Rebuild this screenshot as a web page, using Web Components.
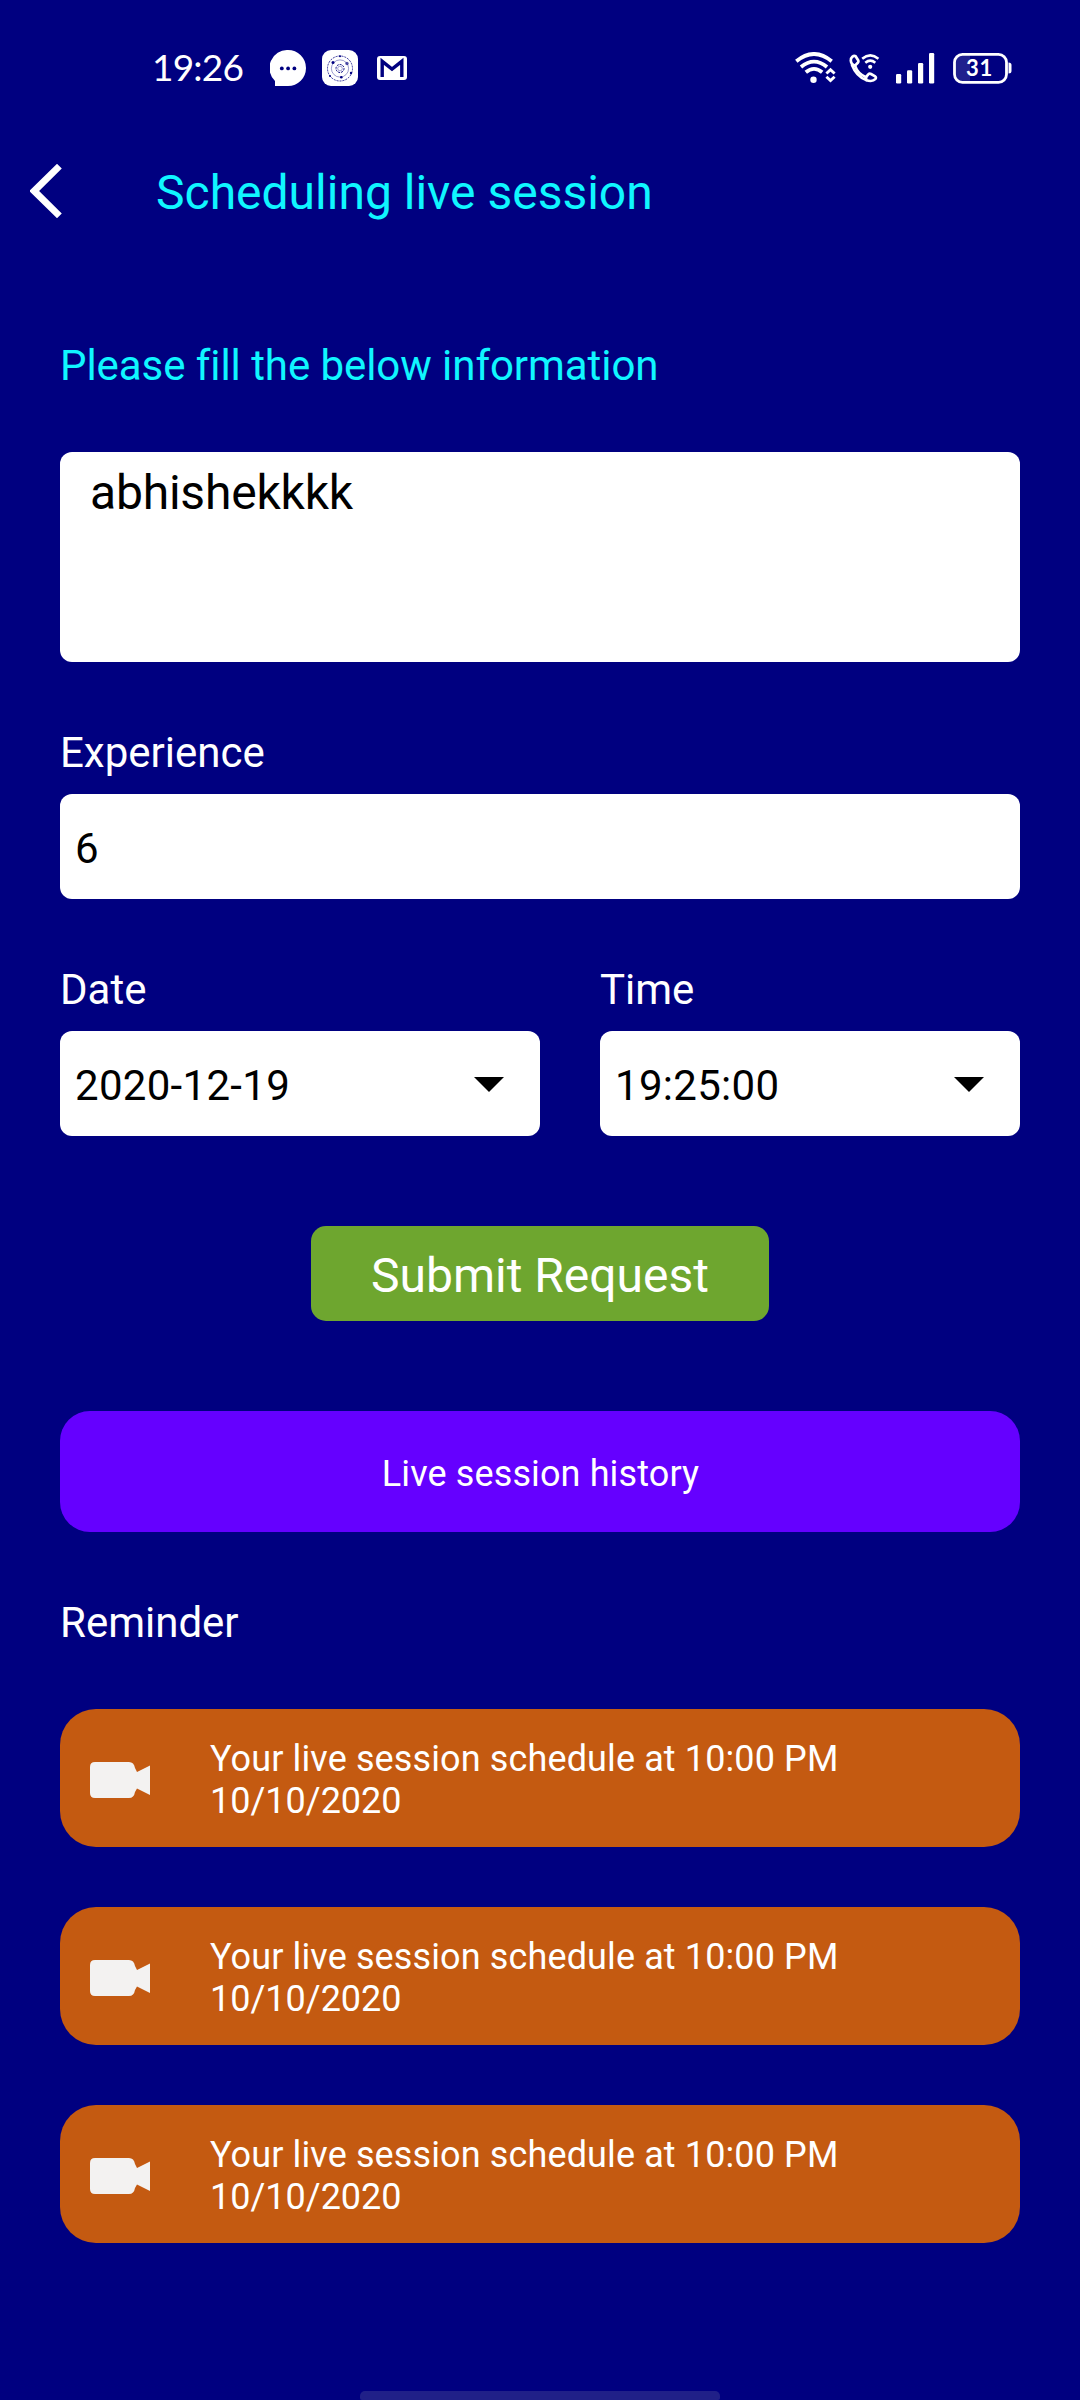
<!DOCTYPE html>
<html lang="en"><head><meta charset="utf-8"><title>Scheduling live session</title>
<style>html,body{margin:0;background:#000080}body{width:1080px;height:2400px;overflow:hidden;font-family:Roboto,"Noto Sans",sans-serif}</style></head>
<body>
<live-session-screen></live-session-screen>
<script>
const define = (name, css, html) => customElements.define(name, class extends HTMLElement {
  constructor() {
    super();
    this.attachShadow({mode: 'open'}).innerHTML = `<style>*{box-sizing:border-box}svg{display:block;flex:none}${css}</style>${typeof html === 'function' ? html(this) : html}`;
  }
});

define('status-bar', `
:host{display:flex;height:136px;padding:0 68px 0 152px;color:#fff}
.left,.right{display:flex;align-items:flex-start}
.right{margin-left:auto}
.time{font:400 37px/44px Lato,sans-serif;margin-top:45px;width:118px;white-space:nowrap;letter-spacing:-.8px}
.battery{width:59px;height:32px;margin-top:52px;position:relative;font:700 22px/31px Lato,sans-serif;text-align:center;padding-right:6px;letter-spacing:.8px}
.battery svg{position:absolute;left:0;top:0}.battery span{position:relative}`,
`<div class="left"><div class="time">19:26</div>
<svg style="margin-top:50px" width="36" height="36" viewBox="0 0 36 36"><path d="M18 0a18 18 0 1 1 0 36H5V31A18 18 0 0 1 18 0Z" fill="#fff"/><g fill="#000080"><circle cx="11.8" cy="18.4" r="1.9"/><circle cx="18.1" cy="18.4" r="1.9"/><circle cx="24.4" cy="18.4" r="1.9"/></g></svg>
<svg style="margin:50px 0 0 16px" width="36" height="36" viewBox="0 0 36 36"><rect width="36" height="36" rx="9" fill="#fff"/><g fill="none" stroke="#000080"><circle cx="18" cy="18.5" r="12.5" stroke-width=".8" stroke-dasharray="2 1"/><circle cx="18" cy="18.5" r="8.6" stroke-width=".6" opacity=".65"/><circle cx="18" cy="18.5" r="4" stroke-width="1" stroke-dasharray="2 1"/><circle cx="18" cy="18.5" r="2.3" stroke-width=".6" opacity=".6"/></g><g fill="#000080"><circle cx="11" cy="12.5" r="1.5"/><circle cx="18" cy="6.2" r="1"/><circle cx="25" cy="13.5" r="1.7" opacity=".65"/><circle cx="29" cy="23" r="1.2"/><circle cx="8" cy="26" r="1"/><circle cx="19.3" cy="27.2" r="1.3"/></g></svg>
<svg style="margin:56px 0 0 19px" width="30" height="24" viewBox="0 0 30 24"><rect width="30" height="24" rx="3" fill="#fff"/><path d="M5.2 21V5.4L15 13.2 24.8 5.4V21" fill="none" stroke="#000080" stroke-width="3.4"/></svg></div>
<div class="right">
<svg style="margin-top:52px" width="41" height="32" viewBox="0 0 41 32"><g fill="none" stroke="#fff" stroke-width="3.8"><path d="M1.3 9.2Q19 -5.3 36.7 9.2"/><path d="M6 15Q19 4.3 32 15"/><path d="M10.8 20.3Q19 13.5 27.2 20.3"/></g><circle cx="18.5" cy="27.8" r="3.2" fill="#fff"/><g fill="none" stroke="#fff" stroke-width="2.9"><path d="M31.4 21.5 35.5 17.7 39.6 21.5"/><path d="M31.4 24.8 35.5 28.6 39.6 24.8"/></g></svg>
<svg style="margin:53px 0 0 13px" width="32" height="31" viewBox="0 0 32 31"><g fill="none" stroke="#fff" stroke-width="2.7" stroke-linejoin="round" stroke-linecap="round"><path d="M1.8 7.6C1.4 4.6 4.6 2 6.6 3.2L9.3 7.4Q9.8 8.8 8.8 9.8L6 12.6C3.6 12 2 9.6 1.8 7.6Z"/><path d="M6 12.6C7.5 17.3 12.2 22.2 17 24.2"/><path d="M3 12C5.5 18.5 10.5 24.5 17.2 27"/><path d="M17 24.2 19.3 21.4Q20.5 20.2 22 21L26.2 23.4Q27.6 24.6 26.2 26.2C24 28.6 19.5 28 17.2 27Z"/></g><g fill="none" stroke="#fff" stroke-width="2.6"><path d="M13.2 5.7Q21.3-1 29.4 5.7"/><path d="M16.3 9.7Q21.3 5.6 26.3 9.7"/></g><circle cx="21.2" cy="13.8" r="2.1" fill="#fff"/></svg>
<svg style="margin:52px 0 0 15px" width="39" height="32" viewBox="0 0 39 32"><g fill="#fff"><rect y="22" width="5.2" height="9.5" rx="1.2"/><rect x="11" y="18.3" width="5.2" height="13.2" rx="1.2"/><rect x="22" y="11" width="5.2" height="20.5" rx="1.2"/><rect x="33" y="1" width="5.2" height="30.5" rx="1.2"/></g></svg>
<div class="battery" style="margin-left:18px"><svg width="59" height="32" viewBox="0 0 59 32"><path d="M3 10a7 7 0 0 1 7-7H17V29H10A7 7 0 0 1 3 22Z" fill="#20208e"/><rect x="1.5" y="2.3" width="52" height="28" rx="8" fill="none" stroke="#fff" stroke-width="2.8"/><path d="M55.5 10.5Q58.5 10.5 58.5 13V19Q58.5 21.5 55.5 21.5Z" fill="#fff"/></svg><span>31</span></div>
</div>`);

define('screen-header', `
:host{display:flex;height:124px;padding-left:30px;align-items:flex-start;color:#10f6ff}
svg{margin-top:28px}h1{margin:29px 0 0 94px;font:400 48px/56px Roboto,sans-serif}`,
`<svg width="32" height="54" viewBox="0 0 32 54"><path d="M29.4 2.2 4.2 27 29.4 51.8" fill="none" stroke="#fff" stroke-width="6.8"/></svg><h1><slot></slot></h1>`);

define('form-field', `
:host{display:flex;flex-direction:column;gap:16px;color:#fff;font-size:42px;line-height:50px}
.box{display:flex;justify-content:space-between;background:#fff;color:#000;height:105px;border-radius:12px;padding:30px 36px 0 15px}
svg{margin-top:16px}
:host([picker]) .box{letter-spacing:.3px}
:host([multiline]) .label{display:none}
:host([multiline]) .box{height:210px;padding:13px 30px;font-size:48px;line-height:56px;letter-spacing:-.2px}`,
el => `<div class="label">${el.getAttribute('label') || ''}</div><div class="box"><span><slot></slot></span>${el.hasAttribute('picker') ? '<svg width="30" height="15" viewBox="0 0 30 15"><path d="M0 0H30L15 15Z"/></svg>' : ''}</div>`);

define('submit-button', `
:host{display:flex;justify-content:center}
button{font:400 48px/56px Roboto,sans-serif;color:#fff;background:#6ea62f;border:0;border-radius:15px;width:458px;height:95px;padding:5px 0 0;display:block;white-space:nowrap}`,
`<button><slot></slot></button>`);

define('history-button', `
:host{display:block}
button{font:400 36px/42px Roboto,sans-serif;letter-spacing:.12px;color:#fff;background:#6500ff;border:0;border-radius:30px;width:960px;height:121px;padding:5px 0 0 1px}`,
`<button><slot></slot></button>`);

define('reminder-card', `
:host{display:flex;height:138px;border-radius:36px;background:#c45a11;color:#fff;font-size:36px;line-height:42px;padding:29px 30px 0}
svg{margin:24px 60px 0 0}
.text::first-line{letter-spacing:.12px}`,
`<svg width="60" height="36" viewBox="0 0 60 36"><path d="M5 0H39Q44 0 45 6L47 10 60 3.5V33L47 26.5 45 30Q44 36 39 36H5Q0 36 0 31V5Q0 0 5 0Z" fill="#f3f2f1"/></svg><div class="text"><slot></slot></div>`);

define('live-session-screen', `
:host{display:flex;flex-direction:column;height:2400px;background:#000080;color:#fff}
main{display:flex;flex-direction:column;padding:81px 60px 0;flex:1}
h2{margin:0;font:400 42px/50px Roboto,sans-serif}
.intro{color:#10f6ff;margin-bottom:61px;letter-spacing:-.06px}
.row{display:grid;grid-template-columns:480px 420px;gap:60px;margin:66px 0 90px}
.exp{margin-top:66px}
history-button{margin:90px 0 66px}
reminder-card span{letter-spacing:.12px}
.cards{display:flex;flex-direction:column;gap:60px;margin-top:61px}
.home{width:360px;height:9px;border-radius:5px 5px 2px 2px;background:#202088;align-self:center}`,
`<status-bar></status-bar><screen-header>Scheduling live session</screen-header>
<main><h2 class="intro">Please fill the below information</h2>
<form-field multiline>abhishekkkk</form-field>
<form-field class="exp" label="Experience">6</form-field>
<div class="row"><form-field label="Date" picker>2020-12-19</form-field><form-field label="Time" picker>19:25:00</form-field></div>
<submit-button>Submit Request</submit-button>
<history-button>Live session history</history-button>
<h2>Reminder</h2>
<div class="cards">${'<reminder-card><span>Your live session schedule at 10:00 PM</span><br>10/10/2020</reminder-card>'.repeat(3)}</div></main>
<div class="home"></div>`);
</script>
</body></html>
